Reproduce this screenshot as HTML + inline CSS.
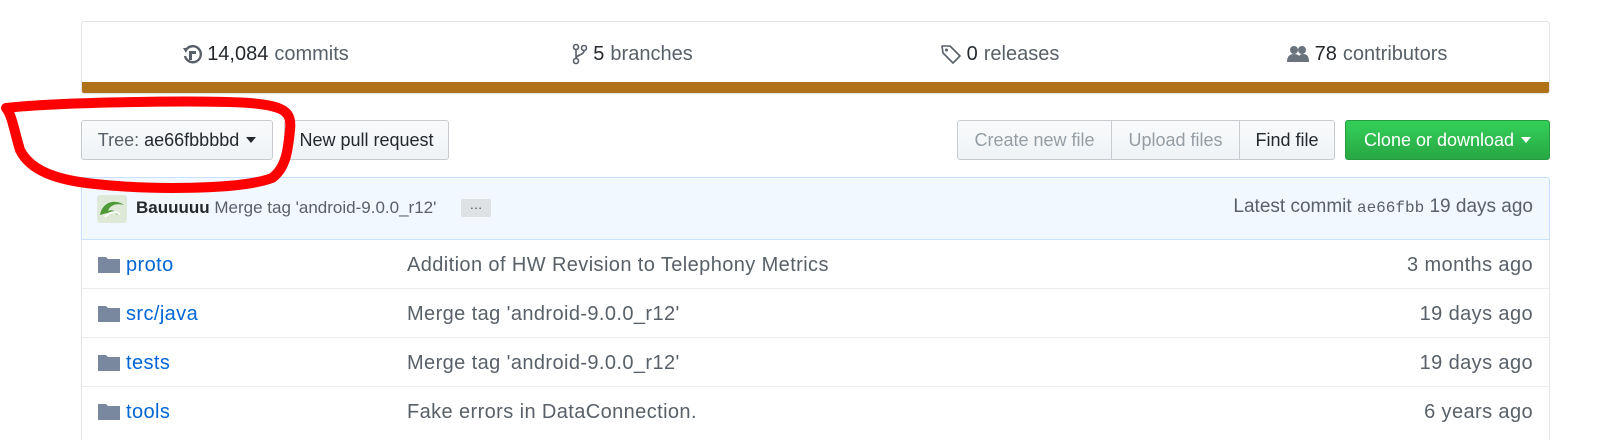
<!DOCTYPE html>
<html><head><meta charset="utf-8"><style>
*{box-sizing:border-box;margin:0;padding:0}
body{width:1600px;height:430px;background:#fff;font-family:"Liberation Sans",sans-serif;position:relative;overflow:hidden;color:#24292e}
.abs{position:absolute}
.stats{left:81px;top:21px;width:1469px;height:73px;border:1px solid #e1e4e8;border-radius:3px;overflow:hidden}
.stats .bar{position:absolute;left:0;right:0;bottom:0;height:11px;background:#b07219}
.stat{position:absolute;top:1px;height:62px;width:367px;display:flex;align-items:center;justify-content:center;font-size:20px;color:#586069}
.stat b{font-weight:normal;color:#24292e;margin-right:6px}
.stat svg{margin-right:5px}
.btn{position:absolute;top:120px;height:40px;border:1px solid #c8ccd1;border-radius:3px;background:linear-gradient(#f9fafb,#eff3f6);font-size:18px;display:flex;align-items:center;justify-content:center;color:#24292e}
.caret{display:inline-block;width:0;height:0;border-left:5px solid transparent;border-right:5px solid transparent;border-top:6px solid currentColor;margin-left:7px}
.commit{left:81px;top:177px;width:1469px;height:63px;background:#f1f8ff;border:1px solid #c8e1ff;border-radius:3px 3px 0 0}
.rows{left:81px;top:240px;width:1469px;height:200px;border-left:1px solid #e1e4e8;border-right:1px solid #e1e4e8}
.row{position:absolute;left:0;right:0;height:49px;border-top:1px solid #eaecef;font-size:20px;letter-spacing:.4px}
.row:first-child{border-top:none}
.row .ic{position:absolute;left:16px;top:15px}
.row .nm{position:absolute;left:44px;top:14px;color:#0366d6}
.row .msg{position:absolute;left:325px;top:14px;color:#586069}
.row .tm{position:absolute;right:16px;top:14px;color:#586069}
</style></head><body>
<div class="abs stats">
  <div class="stat" style="left:0"><svg width="20" height="20" viewBox="0 0 20 20"><path d="M4 6 A8 8 0 1 1 3 12" fill="none" stroke="#586069" stroke-width="2.4"/><path d="M1 4 L6 4 L4 9Z" fill="#586069"/><path d="M7 7h7v3h-4v6H7z" fill="#586069"/></svg><b>14,084</b>commits</div>
  <div class="stat" style="left:367px"><svg width="16" height="22" viewBox="0 0 16 22"><circle cx="4" cy="4" r="2.5" fill="none" stroke="#586069" stroke-width="1.6"/><circle cx="4" cy="18" r="2.5" fill="none" stroke="#586069" stroke-width="1.6"/><circle cx="12" cy="5" r="2.5" fill="none" stroke="#586069" stroke-width="1.6"/><path d="M4 6.5v9M12 7.5c0 5-8 4-8 8" fill="none" stroke="#586069" stroke-width="1.6"/></svg><b>5</b>branches</div>
  <div class="stat" style="left:734px"><svg width="22" height="22" viewBox="0 0 22 22"><path d="M2 3h8l10 10-7 7L3 10z" fill="none" stroke="#586069" stroke-width="1.6" stroke-linejoin="round"/><circle cx="6.5" cy="7" r="1.5" fill="#586069"/></svg><b>0</b>releases</div>
  <div class="stat" style="left:1101px"><svg width="24" height="20" viewBox="0 0 24 20"><circle cx="8" cy="6" r="4" fill="#6a737d"/><circle cx="16" cy="6" r="4" fill="#6a737d"/><path d="M1 18c0-6 3-8 7-8s7 2 7 8zM12 18c0-5 1-8 5-8s6 2 6 8z" fill="#6a737d"/></svg><b>78</b>contributors</div>
  <div class="bar"></div>
</div>
<div class="btn" style="left:81px;width:192px;color:#586069">Tree:&nbsp;<span style="color:#24292e">ae66fbbbbd</span><span class="caret" style="color:#24292e"></span></div>
<div class="btn" style="left:284px;width:165px">New pull request</div>
<div class="btn" style="left:957px;width:155px;border-radius:3px 0 0 3px;color:#959da5">Create new file</div>
<div class="btn" style="left:1111px;width:129px;border-radius:0;color:#959da5">Upload files</div>
<div class="btn" style="left:1239px;width:96px;border-radius:0 3px 3px 0">Find file</div>
<div class="btn" style="left:1345px;width:205px;background:linear-gradient(#34d058,#28a745);border-color:#259a3f;color:#fff">Clone or download<span class="caret"></span></div>
<div class="abs commit">
  <svg class="abs" style="left:15px;top:17px" width="30" height="28" viewBox="0 0 30 28"><rect width="30" height="28" rx="3" fill="#dfe9d8"/><path d="M3 20c2-12 14-17 24-10-8-2-14 0-16 6 4-2 8 0 10 4-6-4-12-2-18 0z" fill="#4e9a36"/><path d="M8 22c4-5 10-6 15-3" stroke="#fff" stroke-width="2" fill="none"/></svg>
  <div class="abs" style="left:54px;top:20px;font-size:17px"><b style="color:#24292e">Bauuuuu</b> <span style="color:#586069">Merge tag 'android-9.0.0_r12'</span></div>
  <div class="abs" style="left:379px;top:21px;width:30px;height:18px;background:#dfe2e5;border-radius:2px;font-size:13px;text-align:center;line-height:12px;color:#444">…</div>
  <div class="abs" style="right:16px;top:18px;font-size:19px;color:#586069">Latest commit <span style="font-family:'Liberation Mono',monospace;font-size:16px">ae66fbb</span> 19 days ago</div>
</div>
<div class="abs rows">
  <div class="row" style="top:0"><svg class="ic" width="22" height="18" viewBox="0 0 22 18"><path d="M0 2h8l2 2h12v14H0z" fill="#79889f"/></svg><span class="nm">proto</span><span class="msg">Addition of HW Revision to Telephony Metrics</span><span class="tm">3 months ago</span></div>
  <div class="row" style="top:48px"><svg class="ic" width="22" height="18" viewBox="0 0 22 18"><path d="M0 2h8l2 2h12v14H0z" fill="#79889f"/></svg><span class="nm">src/java</span><span class="msg">Merge tag 'android-9.0.0_r12'</span><span class="tm">19 days ago</span></div>
  <div class="row" style="top:97px"><svg class="ic" width="22" height="18" viewBox="0 0 22 18"><path d="M0 2h8l2 2h12v14H0z" fill="#79889f"/></svg><span class="nm">tests</span><span class="msg">Merge tag 'android-9.0.0_r12'</span><span class="tm">19 days ago</span></div>
  <div class="row" style="top:146px"><svg class="ic" width="22" height="18" viewBox="0 0 22 18"><path d="M0 2h8l2 2h12v14H0z" fill="#79889f"/></svg><span class="nm">tools</span><span class="msg">Fake errors in DataConnection.</span><span class="tm">6 years ago</span></div>
</div>
<svg class="abs" style="left:0;top:0" width="320" height="200" viewBox="0 0 320 200"><path d="M6 108 C60 102 200 100 250 103 C285 106 292 112 290 130 C288 150 286 168 272 178 C240 190 150 190 95 184 C55 180 30 170 20 150 C14 130 12 115 6 108 Z" fill="none" stroke="#ff0000" stroke-width="10" stroke-linejoin="round"/></svg>
</body></html>
